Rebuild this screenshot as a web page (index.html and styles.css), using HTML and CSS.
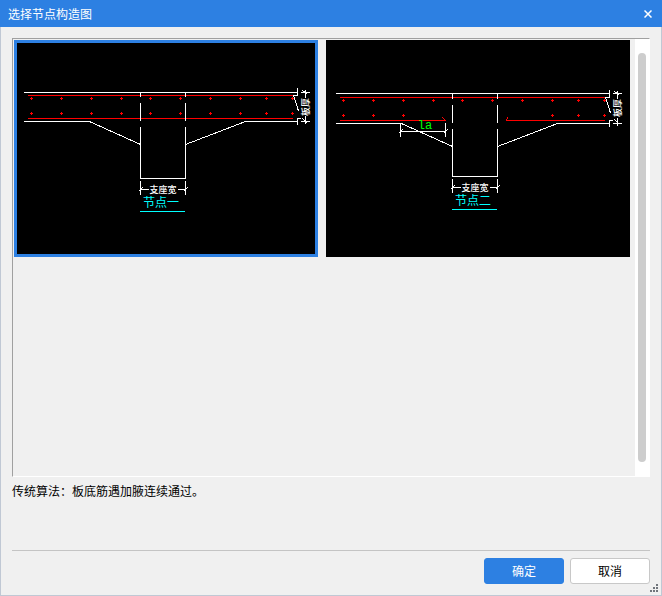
FILE: index.html
```html
<!DOCTYPE html>
<html lang="zh-CN">
<head>
<meta charset="utf-8">
<title>选择节点构造图</title>
<link rel="stylesheet" href="styles.css">
</head>
<body>
<main class="dialog">
  <header class="titlebar">
    <h1 class="title">选择节点构造图</h1>
    <button class="close" type="button" aria-label="关闭">
      <svg width="8" height="8" viewBox="0 0 8 8"><path d="M.5 .5 7.5 7.5M7.5 .5 .5 7.5"/></svg>
    </button>
  </header>
  <div class="content">
    <div class="viewer">
      <div class="nodes">
        <button class="node selected" type="button" aria-label="节点一">
          <svg class="drawing" viewBox="14 40 304 217">
            <g class="bar">
              <path d="M28 95.5H293M28 118.5H293"/>
              <path d="M30 98.5h3m27 0h3m27 0h3m27 0h3m26 0h3m27 0h3m27 0h3m27 0h3m23 0h3m23 0h3M30 113.5h3m27 0h3m27 0h3m27 0h3m26 0h3m27 0h3m27 0h3m27 0h3m23 0h3m23 0h3"/>
              <path d="M31.5 97v3m30-3v3m30-3v3m30-3v3m29-3v3m30-3v3m30-3v3m30-3v3m26-3v3m26-3v3M31.5 112v3m30-3v3m30-3v3m30-3v3m29-3v3m30-3v3m30-3v3m30-3v3m26-3v3m26-3v3"/>
            </g>
            <g class="line">
              <path d="M24 92.5H298M24 121.5H90M245 121.5H298"/>
              <path d="M140.5 92v5M140.5 103v18M140.5 127V178.5H185.5V127M185.5 92v5M185.5 103v18"/>
              <path d="M89.5 121.5 140.5 144.5M185.5 144.5 245.5 121.5"/>
              <path d="M297.5 88V95.5H293.5L298.5 111M301 118.5H297.5V125"/>
              <path d="M301 92.5h9M301 121.5h9M305.5 90v8M305.5 116v8M302.5 90.5l5 4M302.5 118.5l5 5"/>
              <path d="M140.5 181v14M185.5 181v14M140 189.5h9M178 189.5h8M138.5 191.5l4-4M183.5 191.5l4-4"/>
            </g>
            <text class="size" x="163" y="193">支座宽</text>
            <text class="size" transform="translate(309 107) rotate(-90)">板厚</text>
            <text class="name" x="161" y="207">节点一</text>
            <path class="underline" d="M140 211.5h45"/>
          </svg>
        </button>
        <button class="node" type="button" aria-label="节点二">
          <svg class="drawing" viewBox="326 40 304 217">
            <g class="bar">
              <path d="M340 97.5H605M340 120.5H445.5L442.5 117.5M605 120.5H506.5L507.5 117"/>
              <path d="M342 100.5h3m27 0h3m27 0h3m27 0h3m26 0h3m27 0h3m27 0h3m27 0h3m23 0h3m23 0h3M342 115.5h3m27 0h3m27 0h3M551 115.5h3m23 0h3m23 0h3"/>
              <path d="M343.5 99v3m30-3v3m30-3v3m30-3v3m29-3v3m30-3v3m30-3v3m30-3v3m26-3v3m26-3v3M343.5 114v3m30-3v3m30-3v3M552.5 114v3m26-3v3m26-3v3"/>
            </g>
            <g class="line">
              <path d="M336 93.5H610M336 123.5H402M557 123.5H610"/>
              <path d="M452.5 93v6M452.5 105v18M452.5 129V176.5H497.5V129M497.5 93v6M497.5 105v18"/>
              <path d="M401.5 123.5 452.5 146.5M497.5 146.5 557.5 123.5"/>
              <path d="M609.5 90V97.5H605.5L610.5 113M613 120.5H609.5V127"/>
              <path d="M613 93.5h9M613 123.5h9M617.5 91v8M617.5 118v8M614.5 91.5l5 4M614.5 119.5l5 5"/>
              <path d="M400.5 123v14M445.5 123v14M400 131.5h46M398.5 133.5l4-4M443.5 133.5l4-4"/>
              <path d="M452.5 179v14M497.5 179v14M452 187.5h9M490 187.5h8M450.5 189.5l4-4M495.5 189.5l4-4"/>
            </g>
            <text class="anchor" x="425" y="129">la</text>
            <text class="size" x="475" y="191">支座宽</text>
            <text class="size" transform="translate(621 108) rotate(-90)">板厚</text>
            <text class="name" x="473" y="205">节点二</text>
            <path class="underline" d="M452 209.5h45"/>
          </svg>
        </button>
      </div>
      <div class="track"><div class="thumb"></div></div>
    </div>
    <p class="note">传统算法：板底筋遇加腋连续通过。</p>
    <footer class="actions">
      <button class="button primary" type="button">确定</button>
      <button class="button" type="button">取消</button>
    </footer>
  </div>
  <svg class="grip" width="8" height="8" viewBox="0 0 8 8"><path d="M6 0h2v2H6zM3 3h2v2H3zM6 3h2v2H6zM0 6h2v2H0zM3 6h2v2H3zM6 6h2v2H6z"/></svg>
</main>
</body>
</html>
```

FILE: styles.css
```css
* {
  box-sizing: border-box;
}

body {
  margin: 0;
  font: 12px/16px "Noto Sans CJK SC", sans-serif;
  color: #000;
}

button {
  font: inherit;
  padding: 0;
}

.dialog {
  position: relative;
  display: flex;
  flex-direction: column;
  min-height: 100vh;
  background: #f0f0f0;
  border: 1px solid #c0c8d4;
  border-top: 0;
}

.titlebar {
  display: flex;
  align-items: center;
  justify-content: space-between;
  height: 27px;
  margin: 0 -1px;
  padding: 0 8px;
  background: #2d80e2;
  color: #fff;
}

.title {
  margin: 0;
  font-size: 12px;
  font-weight: 400;
}

.close {
  display: flex;
  align-items: center;
  justify-content: center;
  width: 12px;
  height: 16px;
  border: 0;
  background: none;
}

.close path {
  fill: none;
  stroke: #fff;
  stroke-width: 1.5;
}

.content {
  flex: 1;
  display: flex;
  flex-direction: column;
  padding: 11px 11px 0;
}

.viewer {
  flex: 1;
  display: flex;
  border: 1px solid #a0a0a0;
  border-right-color: #fff;
  border-bottom-color: #fff;
}

.nodes {
  flex: 1;
  display: grid;
  grid-template-columns: 1fr 1fr;
  gap: 8px;
  align-items: start;
  padding: 1px 5px 0 1px;
}

.node {
  position: relative;
  display: block;
  border: 0;
  background: #000;
}

.selected::after {
  content: "";
  position: absolute;
  inset: 0;
  border: 3px solid #2d80e2;
}

.drawing {
  display: block;
  width: 100%;
}

.drawing path {
  fill: none;
  stroke-width: 1;
  shape-rendering: crispEdges;
}

.bar path {
  stroke: #f00;
}

.line path {
  stroke: #fff;
}

.drawing .underline {
  stroke: #0ff;
}

.drawing text {
  text-anchor: middle;
}

.size {
  font-size: 9px;
  font-weight: 500;
  fill: #fff;
}

.name {
  font-size: 12px;
  fill: #0ff;
}

.anchor {
  font: 12px "Liberation Mono", monospace;
  fill: #0f0;
}

.track {
  display: flex;
  width: 14px;
  padding: 14px 3px;
  background: #fff;
}

.thumb {
  flex: 1;
  border-radius: 4px;
  background: #cdcdcd;
}

.note {
  height: 73px;
  margin: 0;
  padding-top: 6px;
}

.actions {
  display: flex;
  justify-content: flex-end;
  gap: 6px;
  padding: 7px 0 11px;
  border-top: 1px solid #c4c4c4;
}

.button {
  width: 80px;
  height: 26px;
  border: 1px solid #c8c8c8;
  border-radius: 3px;
  background: #fff;
  color: #000;
}

.primary {
  border-color: #2d80e2;
  background: #2d80e2;
  color: #fff;
}

.grip {
  position: absolute;
  right: 3px;
  bottom: 3px;
  fill: #70757c;
}
```
